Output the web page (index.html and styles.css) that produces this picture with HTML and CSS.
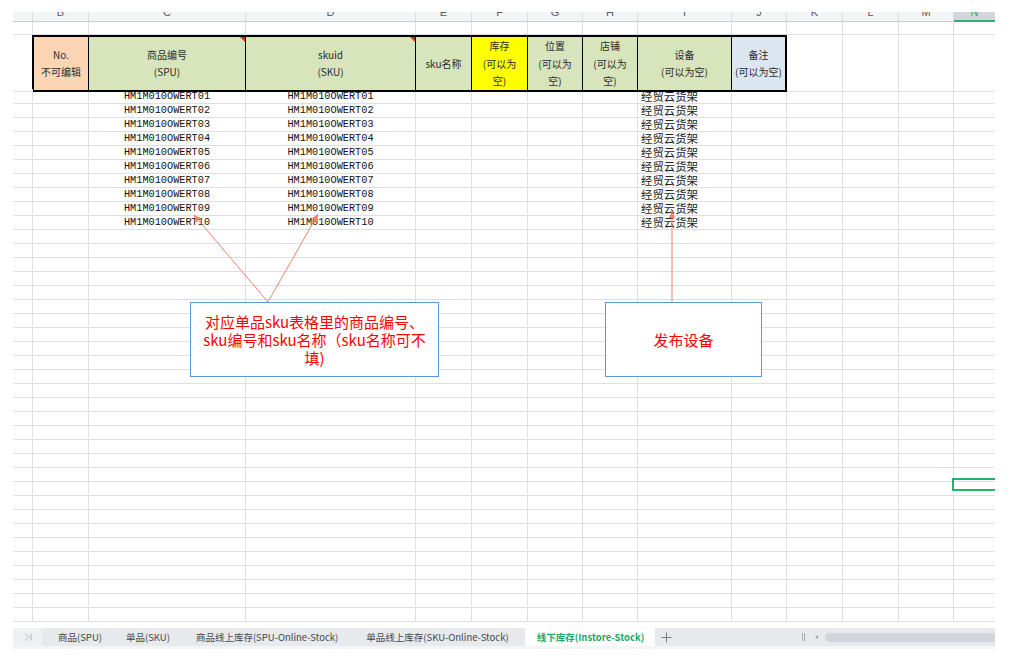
FILE: index.html
```html
<!DOCTYPE html>
<html lang="zh-CN">
<head>
<meta charset="utf-8">
<title>线下库存(Instore-Stock)</title>
<link rel="stylesheet" href="styles.css">
</head>
<body>
<div class="sheet">
  <div class="row colhdr"><i></i><i>B</i><i>C</i><i>D</i><i>E</i><i>F</i><i>G</i><i>H</i><i>I</i><i>J</i><i>K</i><i>L</i><i>M</i><i class="cur">N</i></div>
  <div class="row r1"><i></i><i></i><i></i><i></i><i></i><i></i><i></i><i></i><i></i><i></i><i></i><i></i><i></i><i></i></div>
  <div class="row hdr">
    <i class="ha"></i>
    <div class="h peach first"><span>No.</span><span>不可编辑</span></div>
    <div class="h green note"><span>商品编号</span><span>(SPU)</span></div>
    <div class="h green note"><span>skuid</span><span>(SKU)</span></div>
    <div class="h green"><span>sku名称</span></div>
    <div class="h yellow"><span>库存</span><span>(可以为</span><span>空)</span></div>
    <div class="h green"><span>位置</span><span>(可以为</span><span>空)</span></div>
    <div class="h green"><span>店铺</span><span>(可以为</span><span>空)</span></div>
    <div class="h green"><span>设备</span><span>(可以为空)</span></div>
    <div class="h blue last"><span>备注</span><span>(可以为空)</span></div>
    <i></i><i></i><i></i><i></i>
  </div>
  <div class="row first-data"><i></i><i></i><i class="code">HM1M010OWERT01</i><i class="code">HM1M010OWERT01</i><i></i><i></i><i></i><i></i><i class="dev">经贸云货架</i><i></i><i></i><i></i><i></i><i></i></div>
  <div class="row"><i></i><i></i><i class="code">HM1M010OWERT02</i><i class="code">HM1M010OWERT02</i><i></i><i></i><i></i><i></i><i class="dev">经贸云货架</i><i></i><i></i><i></i><i></i><i></i></div>
  <div class="row"><i></i><i></i><i class="code">HM1M010OWERT03</i><i class="code">HM1M010OWERT03</i><i></i><i></i><i></i><i></i><i class="dev">经贸云货架</i><i></i><i></i><i></i><i></i><i></i></div>
  <div class="row"><i></i><i></i><i class="code">HM1M010OWERT04</i><i class="code">HM1M010OWERT04</i><i></i><i></i><i></i><i></i><i class="dev">经贸云货架</i><i></i><i></i><i></i><i></i><i></i></div>
  <div class="row"><i></i><i></i><i class="code">HM1M010OWERT05</i><i class="code">HM1M010OWERT05</i><i></i><i></i><i></i><i></i><i class="dev">经贸云货架</i><i></i><i></i><i></i><i></i><i></i></div>
  <div class="row"><i></i><i></i><i class="code">HM1M010OWERT06</i><i class="code">HM1M010OWERT06</i><i></i><i></i><i></i><i></i><i class="dev">经贸云货架</i><i></i><i></i><i></i><i></i><i></i></div>
  <div class="row"><i></i><i></i><i class="code">HM1M010OWERT07</i><i class="code">HM1M010OWERT07</i><i></i><i></i><i></i><i></i><i class="dev">经贸云货架</i><i></i><i></i><i></i><i></i><i></i></div>
  <div class="row"><i></i><i></i><i class="code">HM1M010OWERT08</i><i class="code">HM1M010OWERT08</i><i></i><i></i><i></i><i></i><i class="dev">经贸云货架</i><i></i><i></i><i></i><i></i><i></i></div>
  <div class="row"><i></i><i></i><i class="code">HM1M010OWERT09</i><i class="code">HM1M010OWERT09</i><i></i><i></i><i></i><i></i><i class="dev">经贸云货架</i><i></i><i></i><i></i><i></i><i></i></div>
  <div class="row"><i></i><i></i><i class="code">HM1M010OWERT10</i><i class="code">HM1M010OWERT10</i><i></i><i></i><i></i><i></i><i class="dev">经贸云货架</i><i></i><i></i><i></i><i></i><i></i></div>
  <div class="row"><i></i><i></i><i></i><i></i><i></i><i></i><i></i><i></i><i></i><i></i><i></i><i></i><i></i><i></i></div>
  <div class="row"><i></i><i></i><i></i><i></i><i></i><i></i><i></i><i></i><i></i><i></i><i></i><i></i><i></i><i></i></div>
  <div class="row"><i></i><i></i><i></i><i></i><i></i><i></i><i></i><i></i><i></i><i></i><i></i><i></i><i></i><i></i></div>
  <div class="row"><i></i><i></i><i></i><i></i><i></i><i></i><i></i><i></i><i></i><i></i><i></i><i></i><i></i><i></i></div>
  <div class="row"><i></i><i></i><i></i><i></i><i></i><i></i><i></i><i></i><i></i><i></i><i></i><i></i><i></i><i></i></div>
  <div class="row"><i></i><i></i><i></i><i></i><i></i><i></i><i></i><i></i><i></i><i></i><i></i><i></i><i></i><i></i></div>
  <div class="row"><i></i><i></i><i></i><i></i><i></i><i></i><i></i><i></i><i></i><i></i><i></i><i></i><i></i><i></i></div>
  <div class="row"><i></i><i></i><i></i><i></i><i></i><i></i><i></i><i></i><i></i><i></i><i></i><i></i><i></i><i></i></div>
  <div class="row"><i></i><i></i><i></i><i></i><i></i><i></i><i></i><i></i><i></i><i></i><i></i><i></i><i></i><i></i></div>
  <div class="row"><i></i><i></i><i></i><i></i><i></i><i></i><i></i><i></i><i></i><i></i><i></i><i></i><i></i><i></i></div>
  <div class="row"><i></i><i></i><i></i><i></i><i></i><i></i><i></i><i></i><i></i><i></i><i></i><i></i><i></i><i></i></div>
  <div class="row"><i></i><i></i><i></i><i></i><i></i><i></i><i></i><i></i><i></i><i></i><i></i><i></i><i></i><i></i></div>
  <div class="row"><i></i><i></i><i></i><i></i><i></i><i></i><i></i><i></i><i></i><i></i><i></i><i></i><i></i><i></i></div>
  <div class="row"><i></i><i></i><i></i><i></i><i></i><i></i><i></i><i></i><i></i><i></i><i></i><i></i><i></i><i></i></div>
  <div class="row"><i></i><i></i><i></i><i></i><i></i><i></i><i></i><i></i><i></i><i></i><i></i><i></i><i></i><i></i></div>
  <div class="row"><i></i><i></i><i></i><i></i><i></i><i></i><i></i><i></i><i></i><i></i><i></i><i></i><i></i><i></i></div>
  <div class="row"><i></i><i></i><i></i><i></i><i></i><i></i><i></i><i></i><i></i><i></i><i></i><i></i><i></i><i></i></div>
  <div class="row"><i></i><i></i><i></i><i></i><i></i><i></i><i></i><i></i><i></i><i></i><i></i><i></i><i></i><i></i></div>
  <div class="row"><i></i><i></i><i></i><i></i><i></i><i></i><i></i><i></i><i></i><i></i><i></i><i></i><i></i><i class="selcell"></i></div>
  <div class="row"><i></i><i></i><i></i><i></i><i></i><i></i><i></i><i></i><i></i><i></i><i></i><i></i><i></i><i></i></div>
  <div class="row"><i></i><i></i><i></i><i></i><i></i><i></i><i></i><i></i><i></i><i></i><i></i><i></i><i></i><i></i></div>
  <div class="row"><i></i><i></i><i></i><i></i><i></i><i></i><i></i><i></i><i></i><i></i><i></i><i></i><i></i><i></i></div>
  <div class="row"><i></i><i></i><i></i><i></i><i></i><i></i><i></i><i></i><i></i><i></i><i></i><i></i><i></i><i></i></div>
  <div class="row"><i></i><i></i><i></i><i></i><i></i><i></i><i></i><i></i><i></i><i></i><i></i><i></i><i></i><i></i></div>
  <div class="row"><i></i><i></i><i></i><i></i><i></i><i></i><i></i><i></i><i></i><i></i><i></i><i></i><i></i><i></i></div>
  <div class="row"><i></i><i></i><i></i><i></i><i></i><i></i><i></i><i></i><i></i><i></i><i></i><i></i><i></i><i></i></div>
  <div class="row"><i></i><i></i><i></i><i></i><i></i><i></i><i></i><i></i><i></i><i></i><i></i><i></i><i></i><i></i></div>
  <div class="row"><i></i><i></i><i></i><i></i><i></i><i></i><i></i><i></i><i></i><i></i><i></i><i></i><i></i><i></i></div>

  <svg class="arrows" width="982" height="616" viewBox="0 0 982 616">
    <defs>
      <marker id="ah" markerWidth="8" markerHeight="8" refX="7" refY="4" orient="auto" markerUnits="userSpaceOnUse">
        <path d="M0,0.8 L7,4 L0,7.2 Z" fill="#f3826a"/>
      </marker>
    </defs>
    <line x1="255" y1="290" x2="181" y2="203" stroke="#f3826a" stroke-width="1" marker-end="url(#ah)"/>
    <line x1="255" y1="290" x2="305" y2="202" stroke="#f3826a" stroke-width="1" marker-end="url(#ah)"/>
    <line x1="659" y1="290" x2="659" y2="199" stroke="#f3826a" stroke-width="1" marker-end="url(#ah)"/>
  </svg>

  <div class="callout c1">对应单品sku表格里的商品编号、<br>sku编号和sku名称（sku名称可不<br>填)</div>
  <div class="callout c2">发布设备</div>
</div>

<div class="tabbar">
  <div class="nav">
    <svg width="10" height="10" viewBox="0 0 10 10"><path d="M2,1.5 L5.5,5 L2,8.5" fill="none" stroke="#a8abb2" stroke-width="0.9"/><path d="M8,1.5 V8.5" stroke="#a8abb2" stroke-width="0.9"/></svg>
  </div>
  <div class="tabs">
    <span class="tab">商品(SPU)</span>
    <span class="tab">单品(SKU)</span>
    <span class="tab">商品线上库存(SPU-Online-Stock)</span>
    <span class="tab">单品线上库存(SKU-Online-Stock)</span>
    <span class="tab active">线下库存(Instore-Stock)</span>
    <span class="plus"><svg width="11" height="11" viewBox="0 0 11 11"><path d="M5.5,0.5 V10.5 M0.5,5.5 H10.5" stroke="#7a7d84" stroke-width="1"/></svg></span>
  </div>
  <div class="hscroll">
    <span class="grip"></span>
    <span class="larr"></span>
    <span class="thumb"></span>
  </div>
</div>
</body>
</html>
```

FILE: styles.css
```css
html, body {
  margin: 0;
  padding: 0;
  background: #ffffff;
}
body {
  padding: 12px 0 0 13px;
  font-family: "Noto Sans CJK SC", "Liberation Sans", sans-serif;
}
.sheet {
  position: relative;
  width: 982px;
  height: 616px;
  overflow: hidden;
  background: #ffffff;
}
.row {
  display: grid;
  grid-template-columns: 20px 56px 157px 170px 56px 56px 55px 55px 94px 55px 56px 56px 55px 42px;
  height: 14px;
}
.row > * {
  box-sizing: border-box;
  border-right: 1px solid #dcdfe6;
  border-bottom: 1px solid #dcdfe6;
  font-style: normal;
  min-width: 0;
  overflow: hidden;
  white-space: nowrap;
}
.colhdr {
  height: 10px;
  background: #f3f4f6;
}
.colhdr > * {
  border-bottom-color: #c9ccd3;
  font-family: "Liberation Sans", sans-serif;
  font-size: 11px;
  line-height: 1px;
  color: #555a61;
  text-align: center;
}
.colhdr > .cur {
  background: #d3d6dc;
  color: #2fae6c;
  border-bottom: 2px solid #2fb06f;
}
.r1 {
  height: 13px;
}
.hdr {
  height: 54px;
}
.first-data {
  height: 15px;
}
.first-data > * {
  padding-top: 1px;
}
.hdr > .ha {
  border-right-color: #000;
}
.hdr > .h {
  position: relative;
  border-top: 2px solid #000;
  border-bottom: 2px solid #000;
  border-right: 1px solid #000;
  display: flex;
  flex-direction: column;
  align-items: center;
  justify-content: center;
  font-size: 10px;
  line-height: 17.5px;
  color: #2b2b2b;
  white-space: nowrap;
  overflow: visible;
}
.hdr > .first {
  border-left: 1px solid #000;
}
.hdr > .last {
  border-right: 2px solid #000;
}
.peach { background: #fcd5b4; }
.green { background: #d8e4bc; }
.yellow { background: #ffff00; }
.blue { background: #dce6f1; }
.note::after {
  content: "";
  position: absolute;
  top: 0;
  right: 0;
  border-top: 5px solid #e3261c;
  border-left: 5px solid transparent;
}
.code {
  font-family: "Liberation Mono", monospace;
  font-size: 10.25px;
  line-height: 13px;
  color: #111;
  text-align: center;
}
.dev {
  font-family: "Noto Sans CJK SC", sans-serif;
  font-size: 11.4px;
  line-height: 13px;
  color: #222;
  padding-left: 3px;
  text-align: left;
}
.row > .selcell {
  position: relative;
  overflow: visible;
}
.selcell::after {
  content: "";
  position: absolute;
  left: -2px;
  top: -4px;
  right: -4px;
  bottom: 4px;
  border: 2px solid #21b36c;
}
.arrows {
  position: absolute;
  left: 0;
  top: 0;
  pointer-events: none;
}
.callout {
  position: absolute;
  top: 290px;
  height: 75px;
  box-sizing: border-box;
  border: 1px solid #5b95e0;
  background: #ffffff;
  color: #ff0000;
  font-family: "Noto Sans CJK SC", sans-serif;
  font-size: 15px;
  line-height: 18px;
  display: flex;
  align-items: center;
  justify-content: center;
  text-align: center;
}
.c1 {
  left: 177px;
  width: 249px;
}
.c2 {
  left: 592px;
  width: 157px;
}
.tabbar {
  width: 982px;
  height: 18px;
  display: flex;
  align-items: stretch;
  background: #e7e9ec;
  font-family: "Noto Sans CJK SC", sans-serif;
  font-size: 9.5px;
  color: #44474d;
  border-bottom: 3px solid #f4f5f7;
}
.nav {
  width: 29px;
  background: #eef0f2;
  display: flex;
  align-items: center;
  justify-content: center;
}
.tabs {
  display: flex;
  align-items: stretch;
  padding-left: 3px;
}
.tab {
  display: flex;
  align-items: center;
  padding: 0 13px;
}
.tab:nth-child(2) {
  padding: 0 13px 0 11px;
}
.tab:nth-child(4) {
  padding: 0 13px 0 15px;
}
.tab.active {
  background: #ffffff;
  color: #21a865;
  font-weight: bold;
  padding: 0 11px 0 12px;
  margin-left: 3px;
}
.plus {
  display: flex;
  align-items: center;
  padding-left: 6px;
}
.hscroll {
  flex: 1;
  display: flex;
  align-items: center;
  justify-content: flex-end;
}
.grip {
  width: 3px;
  height: 8px;
  border-left: 1px solid #a9acb3;
  border-right: 1px solid #a9acb3;
  box-sizing: border-box;
  margin-right: 10px;
}
.larr {
  width: 0;
  height: 0;
  border-top: 2.5px solid transparent;
  border-bottom: 2.5px solid transparent;
  border-right: 3px solid #9a9da4;
  margin-right: 7px;
}
.thumb {
  width: 170px;
  height: 9px;
  border-radius: 5px 0 0 5px;
  background: #d3d5da;
}
```
